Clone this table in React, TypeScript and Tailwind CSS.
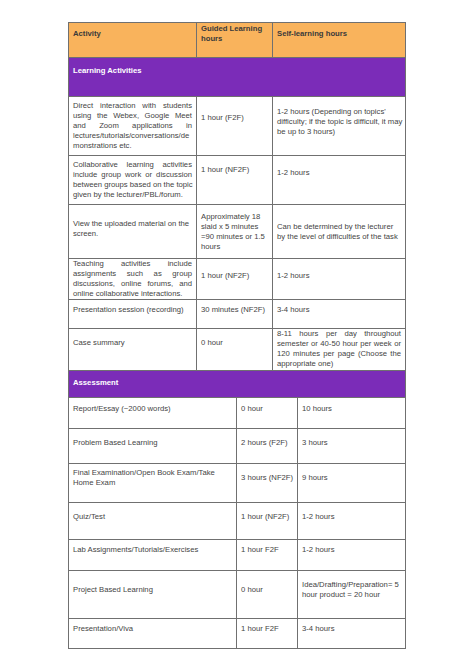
import React from 'react';
import clsx from 'clsx';

// two column layouts: the learning activities part and the assessment part
const upper = 'grid grid-cols-[128px_76px_132px] border-b border-[#707070]';
const lower = 'grid grid-cols-[168px_61px_107px] border-b border-[#707070]';

type CellProps = { className?: string; last?: boolean; children?: React.ReactNode };

const Cell = ({ className, last, children }: CellProps) => (
  <div className={clsx('flex flex-col whitespace-nowrap px-[4px]', !last && 'border-r border-[#707070]', className)}>
    {children}
  </div>
);

// justified line (stretched to the cell width)
const J = ({ children }: { children: React.ReactNode }) => (
  <div className="whitespace-nowrap [text-align-last:justify]">{children}</div>
);

const L = ({ children }: { children: React.ReactNode }) => (
  <div className="whitespace-nowrap">{children}</div>
);

const Band = ({ title, className }: { title: string; className?: string }) => (
  <div className={clsx('bg-[#7b2cb8] border-b border-[#707070] px-[4px] font-bold text-white', className)}>
    {title}
  </div>
);

export default function App() {
  return (
    <div className="min-h-[670px] bg-white pl-[68px] pt-[22px] font-['Liberation_Sans',Arial,sans-serif] text-[7.7px] leading-[10px] text-[#444]">
      <div className="w-[338px] border-x border-t border-[#707070]">
        {/* header */}
        <div className={clsx(upper, 'h-[35px] bg-[#f9b35c] font-bold text-[#3a3a3a]')}>
          <Cell className="justify-center pb-[12px]">Activity</Cell>
          <Cell className="justify-center pb-[12px]">
            <L>Guided Learning</L>
            <L>hours</L>
          </Cell>
          <Cell last className="justify-center pb-[12px]">Self-learning hours</Cell>
        </div>

        <Band title="Learning Activities" className="h-[39px] pt-[8px]" />

        <div className={clsx(upper, 'h-[59px]')}>
          <Cell className="justify-center">
            <J>Direct interaction with students</J>
            <J>using the Webex, Google Meet</J>
            <J>and Zoom applications in</J>
            <L>lectures/tutorials/conversations/de</L>
            <L>monstrations etc.</L>
          </Cell>
          <Cell className="justify-center pb-[17px]">1 hour (F2F)</Cell>
          <Cell last className="justify-center pb-[9px]">
            <L>1-2 hours (Depending on topics'</L>
            <L>difficulty; if the topic is difficult, it may</L>
            <L>be up to 3 hours)</L>
          </Cell>
        </div>

        <div className={clsx(upper, 'h-[49px]')}>
          <Cell className="justify-center">
            <J>Collaborative learning activities</J>
            <J>include group work or discussion</J>
            <J>between groups based on the topic</J>
            <L>given by the lecturer/PBL/forum.</L>
          </Cell>
          <Cell className="justify-center pb-[21px]">1 hour (NF2F)</Cell>
          <Cell last className="justify-center pb-[15px]">1-2 hours</Cell>
        </div>

        <div className={clsx(upper, 'h-[54px]')}>
          <Cell className="justify-center pb-[5px]">
            <L>View the uploaded material on the</L>
            <L>screen.</L>
          </Cell>
          <Cell className="justify-center">
            <L>Approximately 18</L>
            <L>slaid x 5 minutes</L>
            <L>=90 minutes or 1.5</L>
            <L>hours</L>
          </Cell>
          <Cell last className="justify-center">
            <L>Can be determined by the lecturer</L>
            <L>by the level of difficulties of the task</L>
          </Cell>
        </div>

        <div className={clsx(upper, 'h-[41px]')}>
          <Cell className="justify-center">
            <J>Teaching activities include</J>
            <J>assignments such as group</J>
            <J>discussions, online forums, and</J>
            <L>online collaborative interactions.</L>
          </Cell>
          <Cell className="justify-center pb-[7px]">1 hour (NF2F)</Cell>
          <Cell last className="justify-center pb-[7px]">1-2 hours</Cell>
        </div>

        <div className={clsx(upper, 'h-[29px]')}>
          <Cell className="justify-center pb-[9px]">Presentation session (recording)</Cell>
          <Cell className="justify-center pb-[9px]">30 minutes (NF2F)</Cell>
          <Cell last className="justify-center pb-[9px]">3-4 hours</Cell>
        </div>

        <div className={clsx(upper, 'h-[42px]')}>
          <Cell className="justify-center pb-[14px]">Case summary</Cell>
          <Cell className="justify-center pb-[14px]">0 hour</Cell>
          <Cell last className="justify-center pb-[2px]">
            <J>8-11 hours per day throughout</J>
            <J>semester or 40-50 hour per week or</J>
            <J>120 minutes per page (Choose the</J>
            <L>appropriate one)</L>
          </Cell>
        </div>

        <Band title="Assessment" className="h-[27px] pt-[7px]" />

        <div className={clsx(lower, 'h-[31px]')}>
          <Cell className="pt-[6px]">Report/Essay (~2000 words)</Cell>
          <Cell className="pt-[6px]">0 hour</Cell>
          <Cell last className="pt-[6px]">10 hours</Cell>
        </div>

        <div className={clsx(lower, 'h-[35px]')}>
          <Cell className="pt-[9px]">Problem Based Learning</Cell>
          <Cell className="pt-[9px]">2 hours (F2F)</Cell>
          <Cell last className="pt-[9px]">3 hours</Cell>
        </div>

        <div className={clsx(lower, 'h-[39px]')}>
          <Cell className="pt-[4px]">
            <L>Final Examination/Open Book Exam/Take</L>
            <L>Home Exam</L>
          </Cell>
          <Cell className="pt-[9px]">3 hours (NF2F)</Cell>
          <Cell last className="pt-[9px]">9 hours</Cell>
        </div>

        <div className={clsx(lower, 'h-[37px]')}>
          <Cell className="pt-[9px]">Quiz/Test</Cell>
          <Cell className="pt-[9px]">1 hour (NF2F)</Cell>
          <Cell last className="pt-[9px]">1-2 hours</Cell>
        </div>

        <div className={clsx(lower, 'h-[31px]')}>
          <Cell className="pt-[5px]">Lab Assignments/Tutorials/Exercises</Cell>
          <Cell className="pt-[5px]">1 hour F2F</Cell>
          <Cell last className="pt-[5px]">1-2 hours</Cell>
        </div>

        <div className={clsx(lower, 'h-[48px]')}>
          <Cell className="justify-center pb-[10px]">Project Based Learning</Cell>
          <Cell className="justify-center pb-[10px]">0 hour</Cell>
          <Cell last className="justify-center pb-[10px]">
            <L>Idea/Drafting/Preparation= 5</L>
            <L>hour product = 20 hour</L>
          </Cell>
        </div>

        <div className={clsx(lower, 'h-[30px]')}>
          <Cell className="pt-[5px]">Presentation/Viva</Cell>
          <Cell className="pt-[5px]">1 hour F2F</Cell>
          <Cell last className="pt-[5px]">3-4 hours</Cell>
        </div>
      </div>
    </div>
  );
}
